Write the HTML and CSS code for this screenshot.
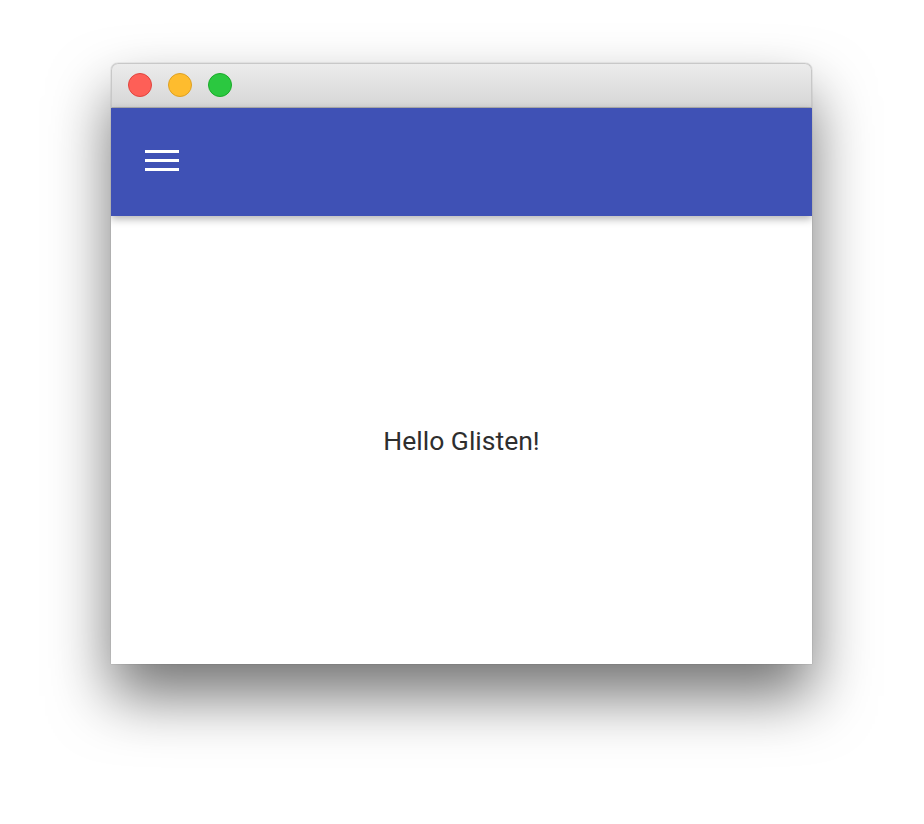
FILE: index.html
```html
<!DOCTYPE html>
<html lang="en">
<head>
  <meta charset="UTF-8">
  <title>Glisten</title>
  <link rel="stylesheet" href="styles.css">
</head>
<body>
  <div class="window">
    <div class="titlebar">
      <span class="light red"></span>
      <span class="light yellow"></span>
      <span class="light green"></span>
    </div>
    <div class="appbar">
      <button class="menu" aria-label="Menu">
        <span></span><span></span><span></span>
      </button>
    </div>
    <div class="content">
      <p class="hello">Hello Glisten!</p>
    </div>
  </div>
</body>
</html>
```

FILE: styles.css
```css
html, body {
  height: 100%;
}
body {
  margin: 0;
  box-sizing: border-box;
  background-color: #fff;
  font-family: Roboto, "Liberation Sans", sans-serif;
  padding: 63px 0 0 111px;
}
.window {
  width: 701px;
  height: 601px;
  display: flex;
  flex-direction: column;
  border-radius: 7px 7px 0 0;
  box-shadow: 0 32px 60px rgba(0, 0, 0, 0.55), 0 0 1px rgba(0, 0, 0, 0.5);
  overflow: hidden;
}
.titlebar {
  height: 45px;
  flex-shrink: 0;
  display: flex;
  align-items: center;
  gap: 16px;
  padding: 0 0 1px 16px;
  background: linear-gradient(#ececec, #d6d6d6);
  box-sizing: border-box;
  border: 1px solid #c8c8c8;
  border-bottom-color: #b0b0b0;
  border-radius: 7px 7px 0 0;
}
.light {
  width: 24px;
  height: 24px;
  border-radius: 50%;
  box-sizing: border-box;
}
.red {
  background: #fe5f57;
  border: 1px solid #e0443e;
}
.yellow {
  background: #febc2e;
  border: 1px solid #dea123;
}
.green {
  background: #2bc840;
  border: 1px solid #1aab29;
}
.appbar {
  height: 108px;
  flex-shrink: 0;
  background: #3f51b5;
  display: flex;
  align-items: center;
  padding: 0 0 4px 34px;
  box-sizing: border-box;
  box-shadow: 0 3px 8px rgba(0, 0, 0, 0.3);
  position: relative;
  z-index: 1;
}
.menu {
  background: none;
  border: none;
  padding: 0;
  width: 34px;
  display: flex;
  flex-direction: column;
  gap: 6px;
  cursor: pointer;
}
.menu span {
  display: block;
  height: 3px;
  background: #fff;
}
.content {
  flex: 1;
  background: #fff;
  display: flex;
  align-items: center;
  justify-content: center;
}
.hello {
  margin: 0;
  font-size: 26.5px;
  color: #2e2e2e;
}
```
